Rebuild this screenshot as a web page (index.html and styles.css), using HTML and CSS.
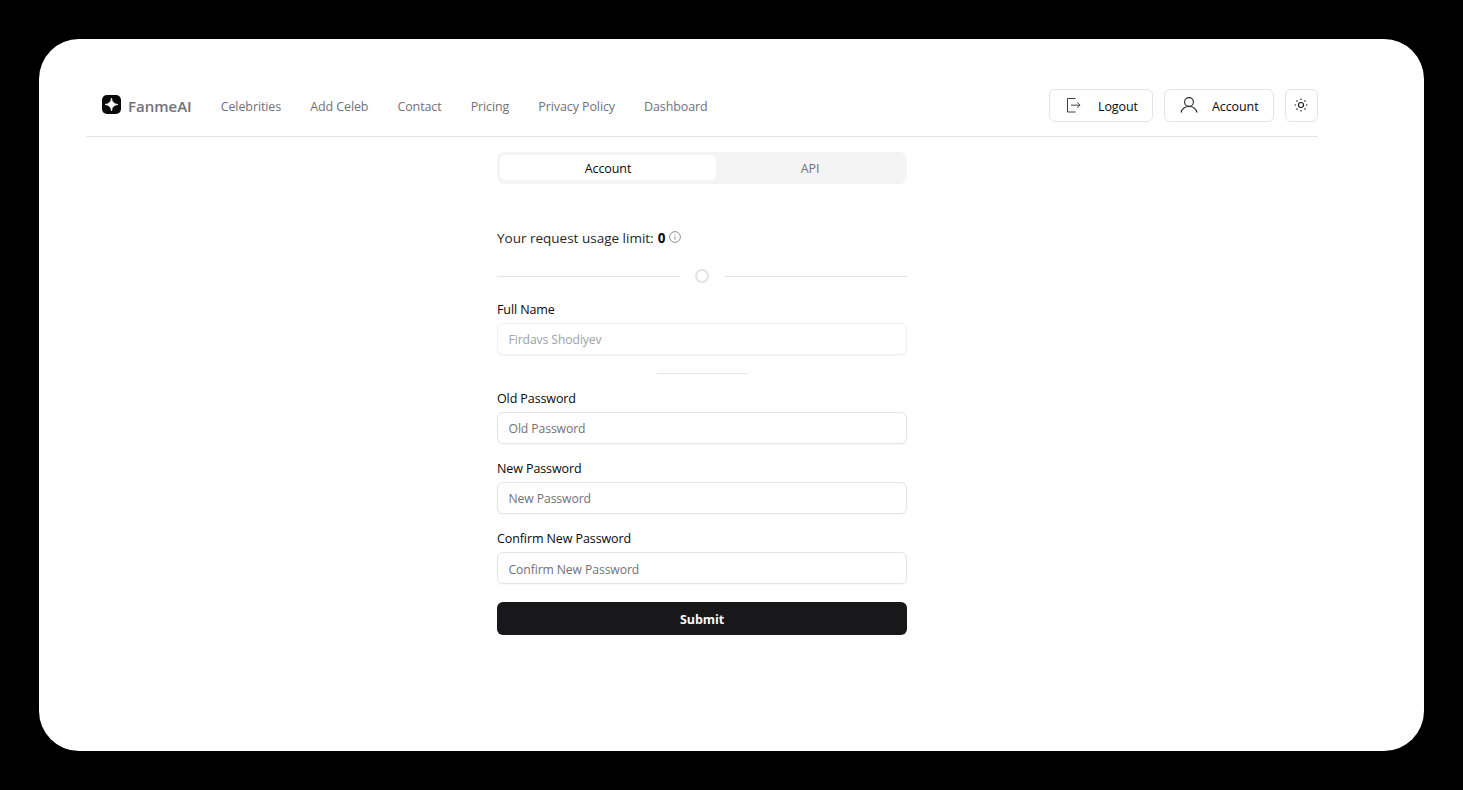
FILE: index.html
```html
<!DOCTYPE html>
<html lang="en">
<head>
<meta charset="utf-8">
<title>FanmeAI Account</title>
<link rel="stylesheet" href="styles.css">
</head>
<body>
<div class="card">
  <div class="inner">
    <header class="header">
      <a class="brand">
        <svg class="brand-icon" viewBox="0 0 19 19" width="19" height="19"><rect width="19" height="19" rx="5" fill="#09090b"/><path d="M9.5 3C10 7 12 9 16 9.5C12 10 10 12 9.5 16C9 12 7 10 3 9.5C7 9 9 7 9.5 3Z" fill="#fff" stroke="#fff" stroke-width=".7" stroke-linejoin="round"/></svg>
        <span class="brand-name">FanmeAI</span>
      </a>
      <nav class="nav">
        <a>Celebrities</a><a>Add Celeb</a><a>Contact</a><a>Pricing</a><a>Privacy Policy</a><a>Dashboard</a>
      </nav>
      <div class="actions">
        <button class="btn btn-logout">
          <svg viewBox="0 0 16 16" width="16" height="16" fill="none" stroke="#3f3f46" stroke-width="1"><path d="M9.5 1.5H1.5V15H9.5"/><path d="M5 8.2H14M11.3 5.5L14 8.2L11.3 10.9"/></svg>
          <span>Logout</span>
        </button>
        <button class="btn btn-account">
          <svg viewBox="0 0 18 18" width="18" height="18" fill="none" stroke="#27272a" stroke-width="1.1"><circle cx="9" cy="6" r="4.4"/><path d="M1 16.5C2 12.8 5 10.5 9 10.5S16 12.8 17 16.5"/></svg>
          <span>Account</span>
        </button>
        <button class="btn btn-theme" aria-label="Toggle theme">
          <svg viewBox="0 0 14 14" width="14" height="14" fill="none" stroke="#18181b" stroke-width="1.1"><circle cx="7" cy="7" r="2.5"/><path d="M7 .6V2.1M7 11.9V13.4M.6 7H2.1M11.9 7H13.4M2.5 2.5L3.5 3.5M10.5 10.5L11.5 11.5M2.5 11.5L3.5 10.5M10.5 3.5L11.5 2.5"/></svg>
        </button>
      </div>
    </header>
    <main class="main">
      <div class="tabs">
        <div class="tab tab-active">Account</div>
        <div class="tab">API</div>
      </div>
      <div class="usage">
        <span>Your request usage limit:</span> <b>0</b>
        <svg class="info" viewBox="0 0 12 12" width="12" height="12" fill="none" stroke="#71717a" stroke-width=".8"><circle cx="6" cy="6" r="5.4"/><path d="M6 5.4V8.6M6 3.4V4.2"/></svg>
      </div>
      <div class="sep">
        <span class="sep-line sep-line-left"></span>
        <span class="sep-dot"></span>
        <span class="sep-line"></span>
      </div>
      <form class="form">
        <div class="field">
          <label class="label">Full Name</label>
          <input class="input input-muted" placeholder="Firdavs Shodiyev" disabled>
        </div>
        <div class="short-rule"></div>
        <div class="field field-gap">
          <label class="label">Old Password</label>
          <input class="input" placeholder="Old Password">
        </div>
        <div class="field field-gap">
          <label class="label">New Password</label>
          <input class="input" placeholder="New Password">
        </div>
        <div class="field">
          <label class="label">Confirm New Password</label>
          <input class="input input-low" placeholder="Confirm New Password">
        </div>
        <button class="submit" type="button">Submit</button>
      </form>
    </main>
  </div>
</div>
</body>
</html>
```
FILE: styles.css
```css
* { box-sizing: border-box; }
html, body { margin: 0; height: 100%; }
body {
  background: #000;
  padding: 39px;
  font-family: "Open Sans", "Noto Sans", sans-serif;
  font-size: 12.5px;
  letter-spacing: -.1px;
  color: #09090b;
  overflow: hidden;
}
.card {
  height: 712px;
  width: 1385px;
  background: #fff;
  border-radius: 40px;
  padding: 50px 106px 0 47px;
}
.inner { width: 1232px; }
.header {
  display: flex;
  align-items: center;
  height: 48px;
  padding: 0 0 15px 16px;
  border-bottom: 1px solid #e4e4e7;
}
.brand { display: flex; align-items: center; gap: 7px; padding-top: 1px; }
.brand-icon { display: block; margin-top: -2px; }
.brand-name { font-size: 15px; font-weight: 600; color: #71717a; letter-spacing: 0; }
.nav { display: flex; gap: 29px; margin-left: 29px; padding-top: 2px; }
.nav a { color: #71717a; font-weight: 500; }
.actions { display: flex; gap: 11px; margin-left: auto; }
.btn {
  display: flex;
  align-items: center;
  height: 33px;
  background: #fff;
  border: 1px solid #e4e4e7;
  border-radius: 6px;
  padding: 0;
  font: 500 12.5px "Open Sans", "Noto Sans", sans-serif;
  letter-spacing: -.1px;
  color: #09090b;
}
.btn span { padding-top: 2px; }
.btn-logout { width: 104px; padding-left: 16px; gap: 16px; }
.btn-account { width: 110px; padding-left: 15px; gap: 14px; }
.btn-theme { width: 33px; justify-content: center; padding-right: 1px; }
.btn svg { display: block; }
.main { width: 410px; margin: 15px auto 0; }
.tabs {
  display: grid;
  grid-template-columns: 216px 1fr;
  height: 32px;
  padding: 3px 3px 4px;
  background: #f4f4f5;
  border-radius: 8px;
}
.tab {
  display: flex;
  align-items: center;
  justify-content: center;
  padding-top: 2px;
  border-radius: 5px;
  font-weight: 500;
  color: #71717a;
}
.tab-active { background: #fff; color: #09090b; }
.usage {
  display: flex;
  align-items: center;
  gap: 4px;
  height: 20px;
  margin-top: 44px;
  padding-bottom: 1px;
  font-size: 13.5px;
  letter-spacing: 0;
  color: #27272a;
}
.usage b { font-weight: 700; color: #09090b; }
.info { margin-top: -2px; }
.sep {
  display: flex;
  align-items: center;
  height: 14px;
  margin-top: 21px;
  gap: 15px;
}
.sep-line { flex: 1; height: 1px; background: #e4e4e7; }
.sep-line-left { flex: none; width: 183px; }
.sep-dot {
  width: 14px;
  height: 14px;
  margin-right: 1px;
  border: 2px solid #e4e4e7;
  border-radius: 50%;
}
.form { margin-top: 16px; display: flex; flex-direction: column; }
.field { display: flex; flex-direction: column; }
.field-gap { margin-bottom: 14px; }
.label { height: 20px; line-height: 22px; margin-bottom: 4px; font-weight: 500; }
.input {
  height: 32px;
  width: 100%;
  padding: 0 10.5px;
  border: 1px solid #e4e4e7;
  border-radius: 6px;
  background: #fff;
  font: 400 12.2px "Open Sans", "Noto Sans", sans-serif;
  letter-spacing: -.1px;
  box-shadow: 0 1px 2px rgba(0,0,0,.04);
  outline: none;
}
.input::placeholder { color: #71717a; opacity: 1; }
.input-low { padding-top: 2px; }
.input-muted { border-color: #f0f0f1; }
.input-muted::placeholder { color: #a1a1aa; }
.short-rule { width: 90px; height: 1px; margin: 18px auto 14px; background: #e4e4e7; }
.submit {
  height: 33px;
  margin-top: 18px;
  padding: 2px 0 0;
  border: 0;
  border-radius: 6px;
  background: #18181b;
  color: #fafafa;
  font: 700 12.5px "Open Sans", "Noto Sans", sans-serif;
  letter-spacing: -.1px;
}
```
